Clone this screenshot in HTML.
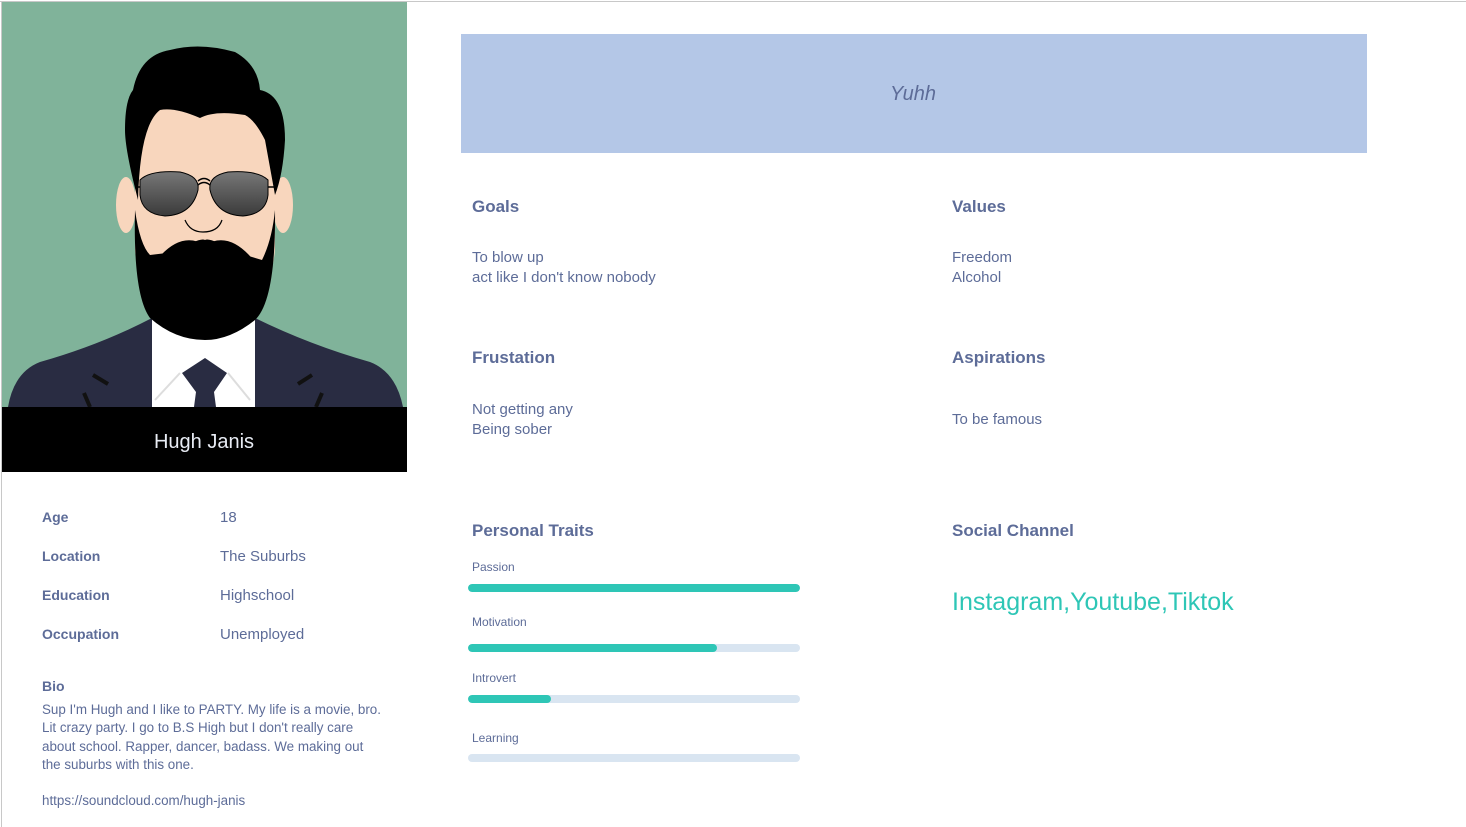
<!DOCTYPE html>
<html><head><style>
body{margin:0;width:1466px;height:827px;background:#fff;position:relative;overflow:hidden;font-family:"Liberation Sans",sans-serif;color:#5d6c98}
.a{position:absolute;white-space:nowrap}
.h{font-weight:bold;font-size:17px}
.t{font-size:15px;line-height:20px}
.b{font-weight:bold;font-size:14px}
.v{font-size:15px}
.s{font-size:12px}
.bar{position:absolute;left:468px;width:332px;height:8px;border-radius:4px;background:#d9e5f1;overflow:hidden}
.bar i{display:block;height:100%;background:#2ec6b6;border-radius:4px}
</style></head><body>
<div class="a" style="left:0;top:1px;width:1466px;height:1px;background:#c8c8c8"></div>
<div class="a" style="left:1px;top:1px;width:1px;height:826px;background:#c8c8c8"></div>
<svg class="a" style="left:2px;top:2px" width="405" height="470" viewBox="2 2 405 470">
<rect x="2" y="2" width="405" height="405" fill="#80b39a"/>
<path d="M8 407 Q14 372 40 362 Q100 345 152 318 L255 318 Q310 345 370 362 Q396 372 403 407 Z" fill="#292c42"/>
<path d="M152 310 L255 310 L255 407 L152 407 Z" fill="#fff"/>
<path d="M155 400 L180 373 M250 400 L228 373" stroke="#ddd" stroke-width="2" fill="none"/>
<path d="M182 373 L205 358 L227 373 L214 392 L196 392 Z M196 392 L214 392 L216 407 L194 407 Z" fill="#292c42"/>
<path d="M93 375 L108 384 M312 375 L298 384 M84 393 L90 407 M322 393 L316 407" stroke="#111" stroke-width="4"/>
<ellipse cx="126" cy="205" rx="10" ry="28" fill="#f8d6bd"/>
<ellipse cx="283" cy="205" rx="10" ry="28" fill="#f8d6bd"/>
<path d="M135 105 L275 105 L275 250 Q270 310 205 330 Q140 310 135 250 Z" fill="#f8d6bd"/>
<path d="M133 90 Q140 55 170 50 Q200 42 235 52 Q258 65 260 90 Q285 95 285 140 Q283 175 275 195 L265 140 Q255 120 245 115 Q215 110 200 118 Q175 107 160 110 Q140 125 138 200 Q125 150 125 130 Q125 100 133 90 Z" fill="#000"/>
<path d="M135 210 Q140 245 150 255 L175 252 Q200 237 205 240 Q210 237 235 252 L262 260 Q272 240 275 210 Q276 300 255 320 Q230 340 205 340 Q175 340 150 318 Q133 295 135 210 Z" fill="#000"/>
<path d="M155 262 Q180 230 205 245 Q230 230 255 262 Q232 255 218 268 Q210 275 205 280 Q195 270 175 262 Q160 258 155 262 Z" fill="#000"/>
<path d="M160 268 Q180 285 205 298 Q230 285 250 268 Q240 300 205 310 Q172 300 160 268 Z" fill="#000"/>
<path d="M185 220 Q190 232 203 232 Q218 232 222 220" stroke="#000" fill="none" stroke-width="1.2"/>
<defs><linearGradient id="g" x1="0" y1="0" x2="0" y2="1"><stop offset="0" stop-color="#777"/><stop offset="1" stop-color="#3a3a3a"/></linearGradient></defs>
<path d="M140 180 Q150 170 180 172 Q200 176 198 190 Q192 215 165 216 Q142 214 140 195 Z" fill="url(#g)" stroke="#000"/>
<path d="M268 180 Q258 170 228 172 Q208 176 210 190 Q216 215 243 216 Q266 214 268 195 Z" fill="url(#g)" stroke="#000"/>
<path d="M135 187 L140 187 M198 185 Q204 180 210 185 M268 187 L275 187 M198 181 Q204 176 210 181" stroke="#000" stroke-width="1.5" fill="none"/>
<rect x="2" y="407" width="405" height="65" fill="#000"/>
<text x="204" y="448" text-anchor="middle" font-family="Liberation Sans,sans-serif" font-size="20" fill="#e8ecf4">Hugh Janis</text>
</svg>
<div class="a b" style="left:42px;top:509px">Age</div><div class="a v" style="left:220px;top:509px">18</div>
<div class="a b" style="left:42px;top:548px">Location</div><div class="a v" style="left:220px;top:548px">The Suburbs</div>
<div class="a b" style="left:42px;top:587px">Education</div><div class="a v" style="left:220px;top:587px">Highschool</div>
<div class="a b" style="left:42px;top:626px">Occupation</div><div class="a v" style="left:220px;top:626px">Unemployed</div>
<div class="a b" style="left:42px;top:678px">Bio</div>
<div class="a" style="left:42px;top:701px;font-size:13.4px;line-height:18.3px">Sup I'm Hugh and I like to PARTY. My life is a movie, bro.<br>Lit crazy party. I go to B.S High but I don't really care<br>about school. Rapper, dancer, badass. We making out<br>the suburbs with this one.</div>
<div class="a" style="left:42px;top:793px;font-size:13.4px">https://soundcloud.com/hugh-janis</div>
<div class="a" style="left:461px;top:34px;width:906px;height:119px;background:#b4c7e7"></div>
<div class="a" style="left:890px;top:83px;font-size:20px;font-style:italic;color:#5d6c98">Yuhh</div>
<div class="a h" style="left:472px;top:197px">Goals</div>
<div class="a t" style="left:472px;top:248px">To blow up<br>act like I don't know nobody</div>
<div class="a h" style="left:952px;top:197px">Values</div>
<div class="a t" style="left:952px;top:248px">Freedom<br>Alcohol</div>
<div class="a h" style="left:472px;top:348px">Frustation</div>
<div class="a t" style="left:472px;top:400px">Not getting any<br>Being sober</div>
<div class="a h" style="left:952px;top:348px">Aspirations</div>
<div class="a t" style="left:952px;top:410px">To be famous</div>
<div class="a h" style="left:472px;top:521px">Personal Traits</div>
<div class="a h" style="left:952px;top:521px">Social Channel</div>
<div class="a" style="left:952px;top:588px;font-size:25px;color:#2ec6b6">Instagram,Youtube,Tiktok</div>
<div class="a s" style="left:472px;top:560px">Passion</div>
<div class="bar" style="top:584px"><i style="width:100%"></i></div>
<div class="a s" style="left:472px;top:615px">Motivation</div>
<div class="bar" style="top:644px"><i style="width:249px"></i></div>
<div class="a s" style="left:472px;top:671px">Introvert</div>
<div class="bar" style="top:695px"><i style="width:83px"></i></div>
<div class="a s" style="left:472px;top:731px">Learning</div>
<div class="bar" style="top:754px"></div>
</body></html>
